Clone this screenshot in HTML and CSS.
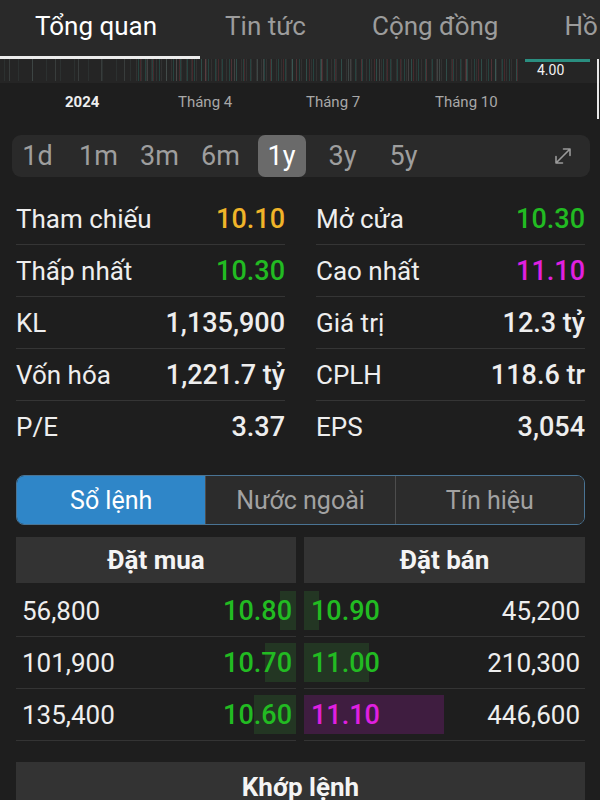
FILE: index.html
```html
<!DOCTYPE html>
<html lang="vi">
<head>
  <meta charset="UTF-8">
  <title>Tổng quan</title>
  <link rel="stylesheet" href="styles.css">
</head>
<body>
<div class="tabs">
  <div class="tab active">Tổng quan</div>
  <div class="tab second">Tin tức</div>
  <div class="tab">Cộng đồng</div>
  <div class="tab">Hồ sơ</div>
</div>

<div class="chart">
  <div class="candles sparse"></div>
  <div class="candles dense"></div>
  <div class="price-tag">4.00</div>
  <div class="cursor"></div>
</div>

<div class="axis">
  <span class="year">2024</span>
  <span>Tháng 4</span>
  <span>Tháng 7</span>
  <span>Tháng 10</span>
</div>

<div class="periods">
  <div class="period">1d</div>
  <div class="period">1m</div>
  <div class="period">3m</div>
  <div class="period">6m</div>
  <div class="period active"><span>1y</span></div>
  <div class="period">3y</div>
  <div class="period">5y</div>
  <svg class="expand" viewBox="0 0 20 20" width="20" height="20">
    <path d="M3 17 L17 3 M10.5 3 H17 V9.5 M3 10.5 V17 H9.5" fill="none" stroke="#9a9a9a" stroke-width="1.6" stroke-linecap="round" stroke-linejoin="round"/>
  </svg>
</div>

<div class="stats">
  <div class="stat"><span>Tham chiếu</span><b class="ref">10.10</b></div>
  <div class="stat"><span>Mở cửa</span><b class="up">10.30</b></div>
  <div class="stat"><span>Thấp nhất</span><b class="up">10.30</b></div>
  <div class="stat"><span>Cao nhất</span><b class="ceil">11.10</b></div>
  <div class="stat"><span>KL</span><b>1,135,900</b></div>
  <div class="stat"><span>Giá trị</span><b>12.3 tỷ</b></div>
  <div class="stat"><span>Vốn hóa</span><b>1,221.7 tỷ</b></div>
  <div class="stat"><span>CPLH</span><b>118.6 tr</b></div>
  <div class="stat last"><span>P/E</span><b>3.37</b></div>
  <div class="stat last"><span>EPS</span><b>3,054</b></div>
</div>

<div class="segment">
  <div class="seg active">Sổ lệnh</div>
  <div class="seg">Nước ngoài</div>
  <div class="seg">Tín hiệu</div>
</div>

<div class="book">
  <div class="side buy">
    <div class="book-head">Đặt mua</div>
    <div class="order"><i class="bar" style="width:16px"></i><span>56,800</span><b class="up">10.80</b></div>
    <div class="order"><i class="bar" style="width:31px"></i><span>101,900</span><b class="up">10.70</b></div>
    <div class="order"><i class="bar" style="width:42px"></i><span>135,400</span><b class="up">10.60</b></div>
  </div>
  <div class="side sell">
    <div class="book-head">Đặt bán</div>
    <div class="order"><i class="bar" style="width:15px"></i><b class="up">10.90</b><span>45,200</span></div>
    <div class="order"><i class="bar" style="width:65px"></i><b class="up">11.00</b><span>210,300</span></div>
    <div class="order"><i class="bar ceil-bar" style="width:140px"></i><b class="ceil">11.10</b><span>446,600</span></div>
  </div>
</div>

<div class="match">Khớp lệnh</div>
</body>
</html>
```

FILE: styles.css
```css
body {
  margin: 0;
  width: 600px;
  height: 800px;
  overflow: hidden;
  background: #1e1e1e;
  color: #eeeeee;
  font-family: Roboto, "Noto Sans", sans-serif;
}

b {
  font-weight: 500;
}

/* top tabs */
.tabs {
  display: flex;
  height: 59px;
  background: #292929;
  white-space: nowrap;
  overflow: hidden;
}

.tab {
  position: relative;
  padding: 0 33px;
  line-height: 52px;
  font-size: 26px;
  color: #9c9c9c;
}

.tab.active {
  color: #ffffff;
  padding-left: 35px;
  padding-right: 43px;
}

.tab.active::after {
  content: '';
  position: absolute;
  left: 0;
  right: 0;
  bottom: 0;
  height: 3px;
  background: #ececec;
}

.tab.second {
  padding-left: 25px;
}

/* chart strip */
.chart {
  position: relative;
  display: flex;
  height: 24px;
  background: #252525;
}

.candles {
  height: 22px;
}

.candles.sparse {
  width: 135px;
  background-image:
    repeating-linear-gradient(90deg, transparent 0 9px, rgba(100, 115, 113, .3) 9px 10px, transparent 10px 23px),
    repeating-linear-gradient(90deg, transparent 0 4px, rgba(70, 90, 88, .22) 4px 5px, transparent 5px 14px);
}

.candles.dense {
  width: 385px;
  background-image:
    repeating-linear-gradient(90deg, transparent 0 3px, rgba(40, 130, 118, .32) 3px 4px, transparent 4px 7px),
    repeating-linear-gradient(90deg, transparent 0 5px, rgba(140, 50, 60, .32) 5px 6px, transparent 6px 13px),
    repeating-linear-gradient(90deg, transparent 0 1px, rgba(100, 100, 100, .2) 1px 2px, transparent 2px 5px),
    repeating-linear-gradient(90deg, transparent 0 12px, rgba(130, 130, 130, .3) 12px 13px, transparent 13px 29px);
}

.price-tag {
  margin-left: 5px;
  width: 53px;
  padding-left: 12px;
  border-top: 3px solid #2a8e80;
  font-size: 14px;
  line-height: 16px;
  color: #f2f2f2;
}

.cursor {
  position: absolute;
  right: 1px;
  top: 0;
  width: 2px;
  height: 60px;
  background: #e8e8e8;
}

/* axis */
.axis {
  display: grid;
  grid-template-columns: 113px 128px 129px auto;
  padding-left: 65px;
  height: 38px;
  align-items: center;
  font-size: 15px;
  color: #a8a8a8;
}

.axis .year {
  font-weight: 700;
  color: #eeeeee;
}

/* period selector */
.periods {
  display: flex;
  align-items: center;
  height: 42px;
  margin: 14px 10px 0 12px;
  background: #2a2a2a;
  border-radius: 9px;
}

.period {
  width: 61px;
  text-align: center;
  font-size: 27px;
  color: #9e9e9e;
}

.period:first-child {
  margin-left: -5px;
}

.period.active span {
  display: inline-block;
  width: 48px;
  line-height: 42px;
  background: #6a6a6a;
  border-radius: 7px;
  color: #ffffff;
}

.expand {
  margin-left: auto;
  margin-right: 17px;
}

/* stats */
.stats {
  display: grid;
  grid-template-columns: 269px 269px;
  column-gap: 31px;
  margin: 16px 15px 0 16px;
}

.stat {
  display: flex;
  justify-content: space-between;
  align-items: center;
  height: 51px;
  border-bottom: 1px solid #353535;
  font-size: 26px;
}

.stat.last {
  border-bottom: none;
}

.stat b {
  font-size: 27px;
}

.ref {
  color: #f0b429;
}

.up {
  color: #22bb22;
}

.ceil {
  color: #e020e0;
}

/* segmented control */
.segment {
  display: flex;
  height: 50px;
  margin: 23px 15px 0 16px;
  border: 1px solid #4a7494;
  border-radius: 8px;
  overflow: hidden;
  box-sizing: border-box;
}

.seg {
  flex: 1;
  display: flex;
  align-items: center;
  justify-content: center;
  font-size: 25px;
  color: #a2a2a2;
  background: #2c2c2c;
}

.seg + .seg {
  border-left: 1px solid #4d4d4d;
}

.seg.active {
  background: #2f86c8;
  color: #ffffff;
}

/* order book */
.book {
  display: grid;
  grid-template-columns: 280px 281px;
  column-gap: 8px;
  margin: 12px 15px 0 16px;
}

.book-head {
  height: 46px;
  line-height: 46px;
  margin-bottom: 2px;
  text-align: center;
  font-size: 26px;
  font-weight: 700;
  background: #333333;
  color: #f4f4f4;
}

.order {
  position: relative;
  display: flex;
  justify-content: space-between;
  align-items: center;
  height: 51px;
  border-bottom: 1px solid #343434;
  font-size: 26px;
}

.order b {
  font-size: 27px;
}

.order span,
.order b {
  position: relative;
}

.bar {
  position: absolute;
  top: 6px;
  bottom: 6px;
  background: #233623;
}

.bar.ceil-bar {
  background: #3f1d40;
}

.buy .order {
  padding: 0 4px 0 6px;
}

.buy .bar {
  right: 0;
}

.sell .order {
  padding: 0 5px 0 7px;
}

.sell .bar {
  left: 0;
}

.match {
  height: 50px;
  margin: 21px 15px 0 16px;
  padding-top: 10px;
  text-align: center;
  font-size: 26px;
  font-weight: 700;
  background: #333333;
  color: #f4f4f4;
}
```
